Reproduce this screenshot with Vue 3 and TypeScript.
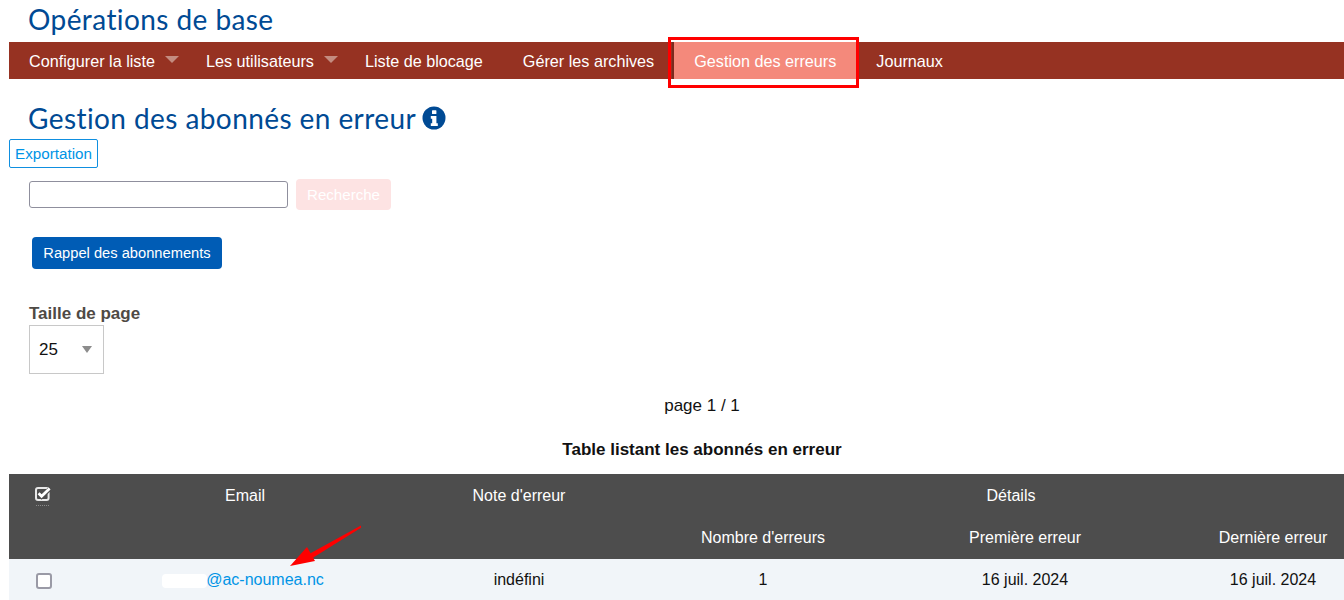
<script setup lang="ts">
interface NavItem { label: string; caret?: boolean; active?: boolean }
const nav: NavItem[] = [
  { label: 'Configurer la liste', caret: true },
  { label: 'Les utilisateurs', caret: true },
  { label: 'Liste de blocage' },
  { label: 'Gérer les archives' },
  { label: 'Gestion des erreurs', active: true },
  { label: 'Journaux' },
]
</script>

<template>
  <div class="page">
    <h1 class="title">Opérations de base</h1>
    <nav class="nav">
      <a v-for="item in nav" :key="item.label" class="nav-item" :class="{ active: item.active, caret: item.caret }">
        {{ item.label }}
        <span v-if="item.caret" class="caret-icon"></span>
        <span v-if="item.active" class="highlight"></span>
      </a>
    </nav>
    <h2 class="subtitle">
      Gestion des abonnés en erreur
      <svg class="info" viewBox="0 0 24 24" width="24" height="24" aria-hidden="true">
        <circle cx="12" cy="12" r="11.5" fill="#004a94" />
        <rect x="10" y="4.2" width="4.4" height="3.8" rx="0.6" fill="#fff" />
        <path d="M8.8 10h5.6v7.2h1.4V20H8.8v-2.8h1.4v-4.4H8.8z" fill="#fff" />
      </svg>
    </h2>
    <button class="export">Exportation</button>
    <div class="search">
      <input class="search-input" type="text" />
      <button class="search-btn">Recherche</button>
    </div>
    <button class="recall">Rappel des abonnements</button>
    <div class="size">
      <label class="size-label">Taille de page</label>
      <div class="select"><span>25</span><span class="select-arrow"></span></div>
    </div>
    <p class="pager">page 1 / 1</p>
    <p class="caption">Table listant les abonnés en erreur</p>
    <table class="table">
      <colgroup>
        <col class="c-check" />
        <col class="c-email" />
        <col class="c-note" />
        <col class="c-count" />
        <col class="c-first" />
        <col class="c-last" />
      </colgroup>
      <thead>
        <tr class="head-1">
          <th class="th-check" rowspan="2">
            <svg class="head-check" viewBox="0 0 16 16" width="16" height="16" aria-hidden="true">
              <rect x="1" y="2" width="12.6" height="12" rx="2" fill="#4d4d4d" stroke="#e8e8e8" stroke-width="2" />
              <path d="M3.6 7.6l3 3L14.6 3" fill="none" stroke="#4d4d4d" stroke-width="4.4" />
              <path d="M3.6 7.2l3 3L14.6 2.6" fill="none" stroke="#fff" stroke-width="2.8" />
            </svg>
            <span class="dots"></span>
          </th>
          <th rowspan="2">Email</th>
          <th rowspan="2">Note d'erreur</th>
          <th colspan="3">Détails</th>
        </tr>
        <tr class="head-2">
          <th>Nombre d'erreurs</th>
          <th>Première erreur</th>
          <th>Dernière erreur</th>
        </tr>
      </thead>
      <tbody>
        <tr class="row">
          <td class="cell-check"><span class="box"></span></td>
          <td class="cell-email">
            <span class="redact"></span>
            <a class="email">@ac-noumea.nc</a>
          </td>
          <td>indéfini</td>
          <td>1</td>
          <td>16 juil. 2024</td>
          <td>16 juil. 2024</td>
        </tr>
      </tbody>
    </table>
    <svg class="arrow" viewBox="0 0 80 50" width="80" height="50" aria-hidden="true">
      <path d="M71 1.5L20 29.5l2.5 4.5L71 3.8z" fill="#f00" />
      <path d="M0 42l17-19 8 14z" fill="#f00" />
    </svg>
  </div>
</template>

<style scoped>
.page {
  position: relative;
  width: 1344px;
  height: 600px;
  overflow: hidden;
  padding-left: 9px;
  box-sizing: border-box;
  font-family: "Liberation Sans", Arial, sans-serif;
  font-size: 16px;
  color: #111;
  background: #fff;
}
.title, .subtitle {
  margin: 0;
  padding-left: 19px;
  font-family: Lato, "Open Sans", sans-serif;
  font-weight: 400;
  font-size: 28px;
  letter-spacing: 0.42px;
  color: #004a94;
}
.title {
  height: 42px;
  line-height: 39px;
}
.nav {
  display: flex;
  height: 37px;
  background: #963222;
  font-size: 16.2px;
}
.nav-item {
  position: relative;
  display: flex;
  align-items: center;
  box-sizing: border-box;
  padding: 1px 20px 0;
  color: #fff;
  white-space: nowrap;
}
.nav-item.caret {
  padding-right: 7px;
}
.nav-item.active {
  background: #f4897b;
  box-shadow: -2px 0 0 #7b2a1d;
}
.caret-icon {
  width: 0;
  height: 0;
  margin-left: 10px;
  margin-top: -3px;
  border-left: 7px solid transparent;
  border-right: 7px solid transparent;
  border-top: 7px solid #c48c80;
}
.highlight {
  position: absolute;
  left: -6px;
  right: -3px;
  top: -5px;
  bottom: -9px;
  border: 3px solid #f00;
}
.subtitle {
  display: flex;
  align-items: center;
  gap: 6px;
  height: 60px;
  box-sizing: border-box;
  padding-top: 18px;
  line-height: 42px;
}
.info {
  flex: none;
}
.export {
  display: block;
  width: 89px;
  height: 29px;
  padding: 0;
  background: #fff;
  border: 1px solid #0f8fe0;
  border-radius: 2px;
  color: #0094e6;
  font: 15.2px "Liberation Sans", Arial, sans-serif;
}
.search {
  display: flex;
  align-items: center;
  gap: 8px;
  margin: 11px 0 0 20px;
  height: 31px;
}
.search-input {
  width: 259px;
  height: 27px;
  box-sizing: border-box;
  padding: 0;
  background: #fff;
  border: 1px solid #8f8f9d;
  border-radius: 3px;
}
.search-btn {
  width: 95px;
  height: 31px;
  padding: 0;
  background: #fde3e3;
  border: 0;
  border-radius: 4px;
  color: #fff;
  font: 15.1px "Liberation Sans", Arial, sans-serif;
}
.recall {
  display: block;
  width: 190px;
  height: 32px;
  margin: 27px 0 0 23px;
  padding: 0;
  background: #005cb5;
  border: 0;
  border-radius: 4px;
  color: #fff;
  font: 14.7px "Liberation Sans", Arial, sans-serif;
}
.size {
  margin: 35px 0 0 20px;
}
.size-label {
  display: block;
  height: 21px;
  line-height: 19px;
  font-weight: 700;
  font-size: 17px;
  color: #4f4a45;
}
.select {
  display: flex;
  align-items: center;
  justify-content: space-between;
  width: 75px;
  height: 49px;
  box-sizing: border-box;
  padding: 0 11px 0 9px;
  border: 1px solid #c8c8c8;
  background: #fff;
  font-size: 17px;
  color: #111;
}
.select-arrow {
  width: 0;
  height: 0;
  border-left: 5.5px solid transparent;
  border-right: 5.5px solid transparent;
  border-top: 7px solid #8c8c8c;
}
.pager, .caption {
  width: 1386px;
  margin: 0;
  text-align: center;
  font-size: 17px;
}
.pager {
  margin-top: 23px;
  height: 18px;
  line-height: 18px;
}
.caption {
  margin-top: 26px;
  height: 18px;
  line-height: 18px;
  font-weight: 700;
}
.table {
  width: 1335px;
  margin-top: 15px;
  table-layout: fixed;
  border-collapse: collapse;
  color: #111;
}
.c-check { width: 121px; }
.c-email { width: 230px; }
.c-note { width: 318px; }
.c-count { width: 170px; }
.c-first { width: 354px; }
.c-last { width: 142px; }
.table th {
  background: #4d4d4d;
  color: #fff;
  font-weight: 400;
  text-align: center;
  padding: 0;
}
.head-1 th {
  height: 43px;
}
.head-2 th {
  height: 42px;
}
.table th[rowspan="2"] {
  vertical-align: top;
  padding-top: 13px;
}
.th-check {
  position: relative;
}
.head-check {
  position: absolute;
  left: 26px;
  top: 12px;
}
.dots {
  position: absolute;
  left: 27px;
  top: 31px;
  width: 13px;
  border-top: 1px dotted #8a8a8a;
}
.row td {
  height: 41px;
  padding: 0;
  background: #f1f5f9;
  text-align: center;
}
.cell-check {
  position: relative;
}
.box {
  position: absolute;
  left: 27px;
  top: 14px;
  width: 16px;
  height: 16px;
  box-sizing: border-box;
  background: #fff;
  border: 2px solid #9a9aa6;
  border-radius: 3px;
}
.cell-email {
  position: relative;
}
.redact {
  position: absolute;
  left: 32px;
  top: 15px;
  width: 45px;
  height: 14px;
  background: #fff;
  border-radius: 4px;
}
.email {
  display: inline-block;
  margin-left: 40px;
  color: #0094e6;
}
.arrow {
  position: absolute;
  left: 290px;
  top: 524px;
}
</style>
